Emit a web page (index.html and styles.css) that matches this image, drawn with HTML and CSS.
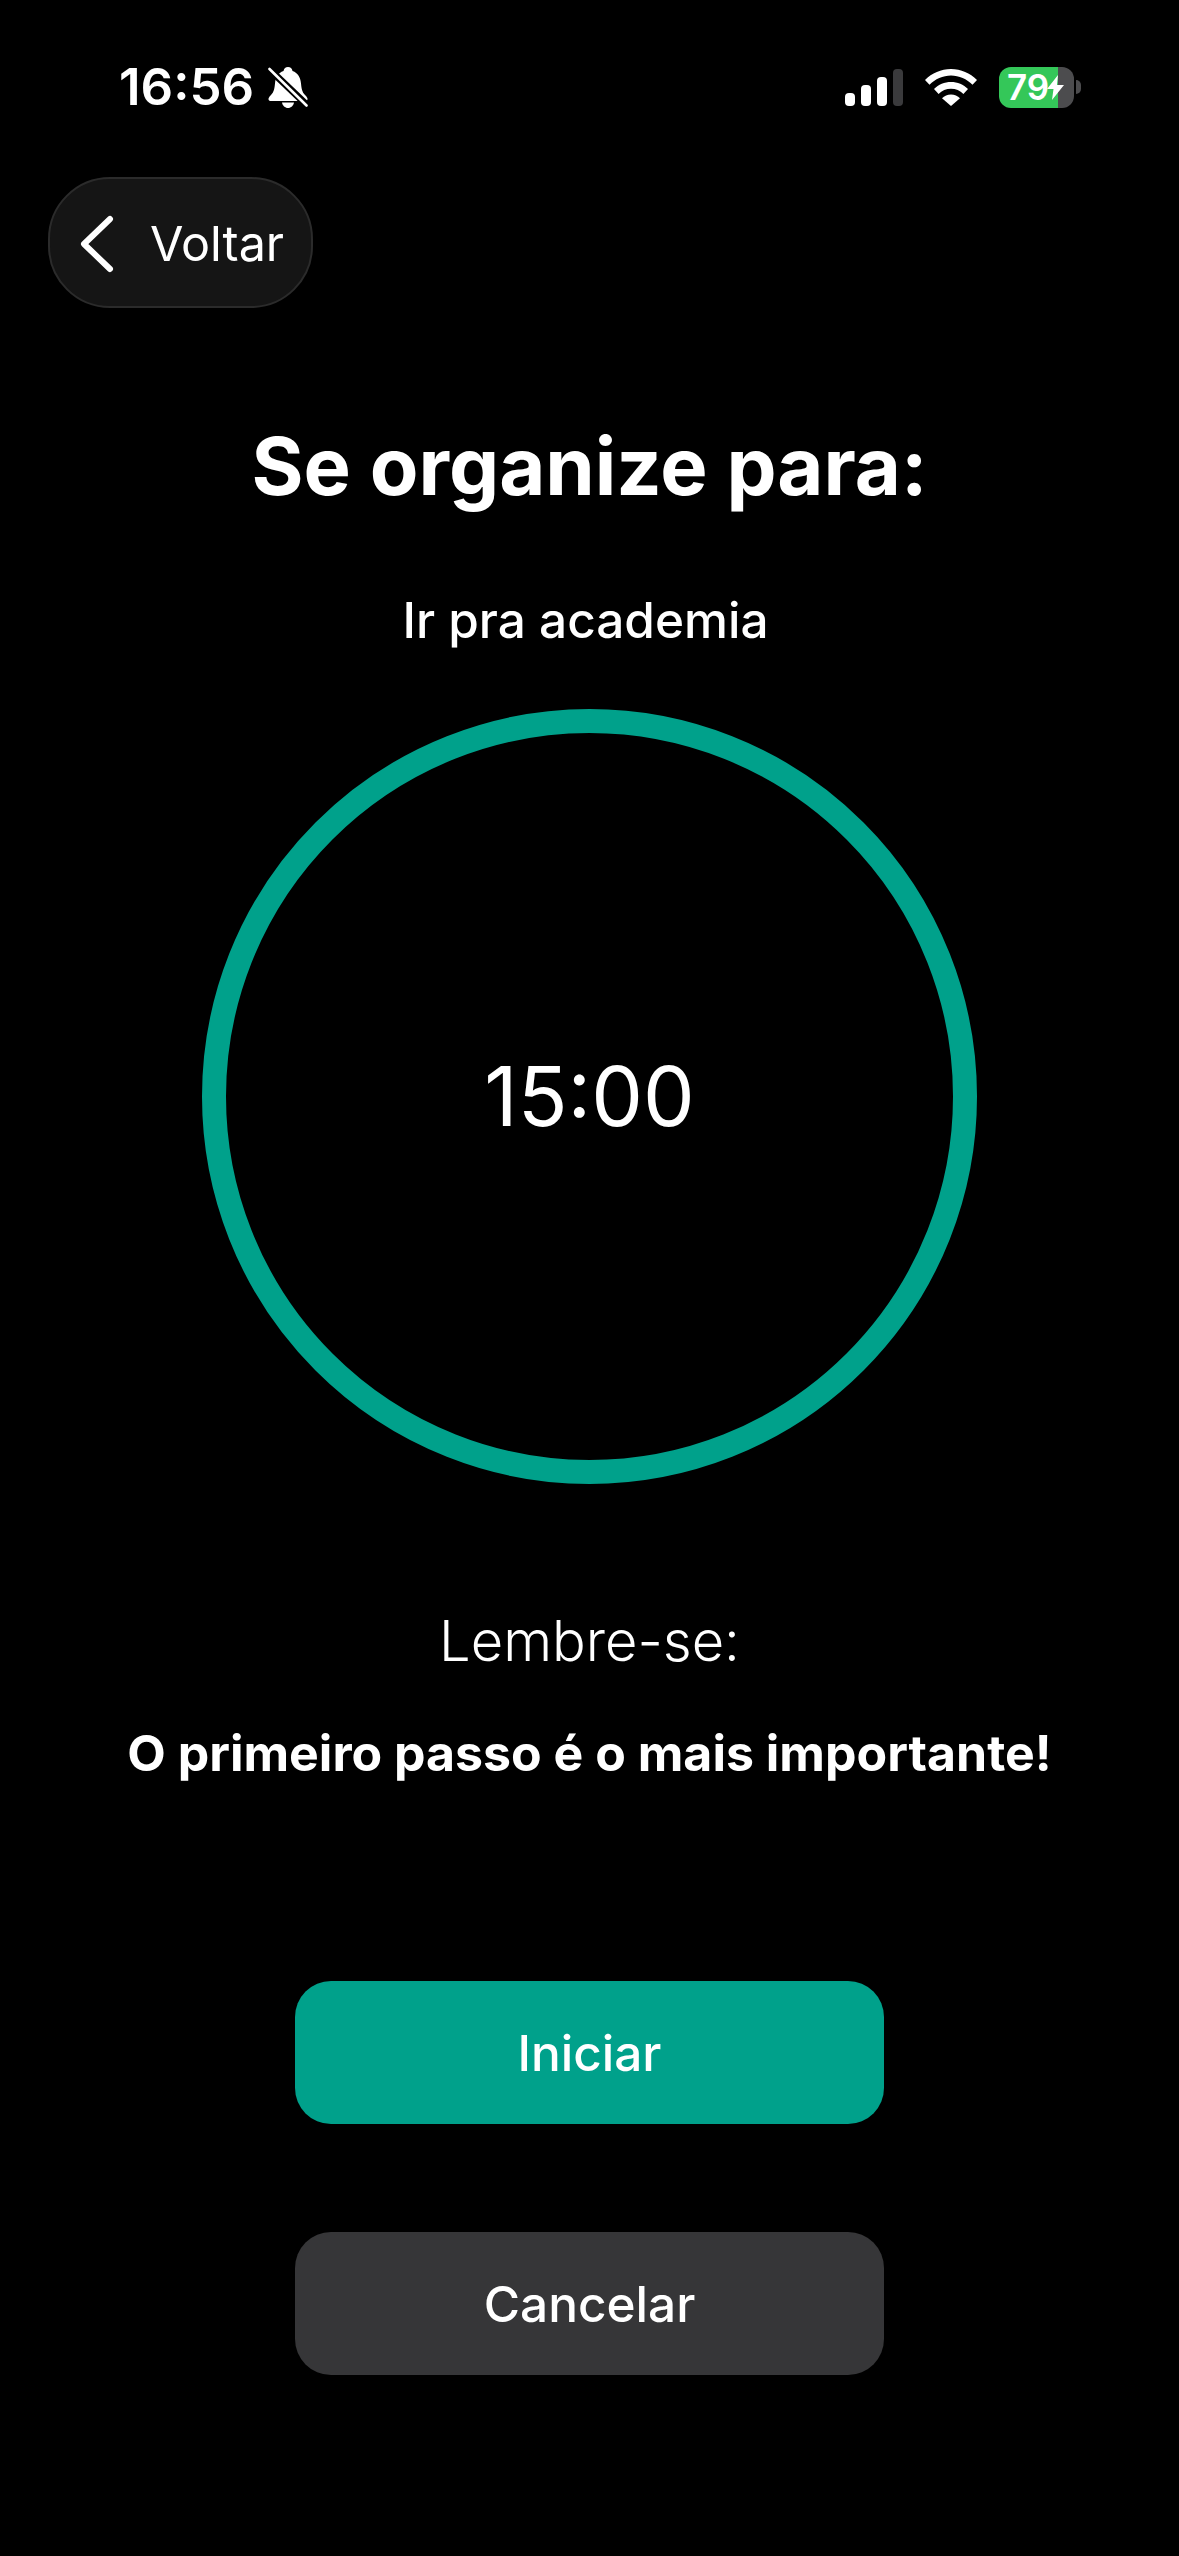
FILE: index.html
```html
<!DOCTYPE html>
<html lang="pt-BR">
<head>
    <meta charset="UTF-8">
    <meta name="viewport" content="width=device-width, initial-scale=1.0">
    <title>Se organize</title>
    <link rel="stylesheet" href="styles.css">
</head>
<body>
    <div class="screen">
        <div class="status-bar">
            <div class="status-left">
                <span class="clock">16:56</span>
                <svg class="bell" viewBox="0 0 40 41">
                    <path d="M20 0c-2.500 0-4 1.500-4.500 4C10 6 7.500 10.500 7 16.500c-.5 5-1 8.500-4 11.500-2 2-2.500 3-2.500 4 0 1.500 1 2 2.500 2h34c1.500 0 2.500-.5 2.500-2 0-1-.5-2-2.500-4-3-3-3.500-6.500-4-11.500C32.500 10.500 30 6 24.500 4 24 1.500 22.500 0 20 0z" fill="#fff"/>
                    <path d="M14 35.500h12c-.5 3-3 5.500-6 5.500s-5.500-2.500-6-5.500z" fill="#fff"/>
                    <path d="M-2 -1L42 41" stroke="#000" stroke-width="7"/>
                    <path d="M1.500 2L38.500 38.500" stroke="#fff" stroke-width="2.600" stroke-linecap="round"/>
                </svg>
            </div>
            <div class="status-right">
                <svg class="signal" viewBox="0 0 58 37">
                    <rect x="0" y="24" width="10" height="13" rx="4" fill="#fff"/>
                    <rect x="16" y="16" width="10" height="21" rx="4" fill="#fff"/>
                    <rect x="32" y="8" width="10" height="29" rx="4" fill="#fff"/>
                    <rect x="48" y="0" width="10" height="37" rx="4" fill="#3a3a3c"/>
                </svg>
                <svg class="wifi" viewBox="0 0 52 37">
                    <path d="M26 0C16 0 7 4 0 11l4.500 4.800C10 10 18 6.500 26 6.500S42 10 47.500 15.800L52 11C45 4 36 0 26 0z" fill="#fff"/>
                    <path d="M26 13c-6.500 0-12.500 2.600-17 7l4.600 4.900c3.300-3.300 7.700-5.200 12.400-5.200s9.100 1.900 12.400 5.200L43 20c-4.500-4.400-10.500-7-17-7z" fill="#fff"/>
                    <path d="M26 25.500c-3.500 0-6.700 1.400-9 3.700L26 37l9-7.800c-2.300-2.300-5.500-3.700-9-3.700z" fill="#fff"/>
                </svg>
                <div class="battery">
                    <span class="battery-level">79</span>
                    <svg class="bolt" viewBox="0 0 17 25">
                        <path d="M11 0L0 14h6.500L5 25 17 10h-7z" fill="#fff"/>
                    </svg>
                </div>
                <span class="battery-nub"></span>
            </div>
        </div>

        <div class="back-row">
            <button class="back-btn" type="button">
                <svg class="chevron" viewBox="0 0 36 58">
                    <path d="M32 4L6 29l26 25" fill="none" stroke="#fff" stroke-width="6" stroke-linecap="round" stroke-linejoin="round"/>
                </svg>
                <span>Voltar</span>
            </button>
        </div>

        <h1 class="title">Se organize para:</h1>
        <p class="task">Ir pra academia</p>

        <div class="ring">
            <span class="time">15:00</span>
        </div>

        <p class="remember">Lembre-se:</p>
        <p class="quote">O primeiro passo é o mais importante!</p>

        <div class="actions">
            <button class="action action-start" type="button">Iniciar</button>
            <button class="action action-cancel" type="button">Cancelar</button>
        </div>
    </div>
</body>
</html>
```

FILE: styles.css
```css
html, body {
    margin: 0;
    padding: 0;
    background-color: #000;
}
body {
    font-family: Inter, "Noto Sans", sans-serif;
    color: #fff;
}
p, h1 {
    margin: 0;
}
button {
    font-family: inherit;
    color: #fff;
    border: none;
    cursor: pointer;
}
.screen {
    width: 1179px;
    height: 2556px;
    display: flex;
    flex-direction: column;
    align-items: center;
    overflow: hidden;
}

/* status bar */
.status-bar {
    width: 100%;
    box-sizing: border-box;
    height: 110px;
    padding: 64px 98px 0 119px;
    display: flex;
    justify-content: space-between;
    align-items: flex-start;
}
.status-left {
    display: flex;
    align-items: center;
    height: 46px;
    gap: 14px;
}
.clock {
    font-size: 51px;
    line-height: 46px;
    font-weight: 600;
}
.bell {
    width: 40px;
    height: 41px;
}
.status-right {
    display: flex;
    align-items: center;
    height: 46px;
}
.signal {
    width: 58px;
    height: 37px;
}
.wifi {
    width: 52px;
    height: 37px;
    margin-left: 22px;
}
.battery {
    width: 75px;
    height: 41px;
    margin-left: 22px;
    border-radius: 12px;
    background: linear-gradient(to right, #34c759 0, #34c759 79%, #4c4c4e 79%);
    display: flex;
    align-items: center;
    padding-left: 8px;
    box-sizing: border-box;
}
.battery-level {
    font-size: 35px;
    line-height: 41px;
    font-weight: 600;
}
.bolt {
    width: 17px;
    height: 25px;
    flex-shrink: 0;
    margin-left: -2px;
}
.battery-nub {
    width: 5px;
    height: 14px;
    margin-left: 2px;
    background-color: #4c4c4e;
    border-radius: 0 7px 7px 0;
}

/* back button */
.back-row {
    width: 100%;
    box-sizing: border-box;
    margin-top: 67px;
    padding-left: 48px;
}
.back-btn {
    width: 265px;
    height: 131px;
    box-sizing: border-box;
    display: flex;
    align-items: center;
    padding: 2px 0 0 28px;
    gap: 36px;
    background-color: #151515;
    border: 2px solid #2b2b2b;
    border-radius: 62px;
    font-size: 48.500px;
    line-height: 60px;
}
.chevron {
    width: 36px;
    height: 58px;
}

/* headings */
.title {
    margin-top: 113px;
    font-size: 79.500px;
    line-height: 90px;
    font-weight: 700;
}
.task {
    margin-top: 79px;
    margin-right: 8px;
    font-size: 49.500px;
    line-height: 60px;
    font-weight: 550;
}

/* timer */
.ring {
    width: 775px;
    height: 775px;
    box-sizing: border-box;
    margin-top: 59px;
    border: 24px solid #00a18b;
    border-radius: 50%;
    display: flex;
    align-items: center;
    justify-content: center;
}
.time {
    font-size: 82px;
    line-height: 100px;
    font-weight: 400;
}

/* message */
.remember {
    margin-top: 122px;
    font-size: 56px;
    line-height: 70px;
    font-weight: 350;
}
.quote {
    margin-top: 45px;
    font-size: 50px;
    line-height: 64px;
    font-weight: 700;
}

/* actions */
.actions {
    margin-top: 196px;
    display: flex;
    flex-direction: column;
    gap: 108px;
}
.action {
    width: 589px;
    height: 143px;
    border-radius: 36px;
    font-size: 49.500px;
    font-weight: 550;
}
.action-start {
    background-color: #00a18b;
}
.action-cancel {
    background-color: #363638;
}
```
